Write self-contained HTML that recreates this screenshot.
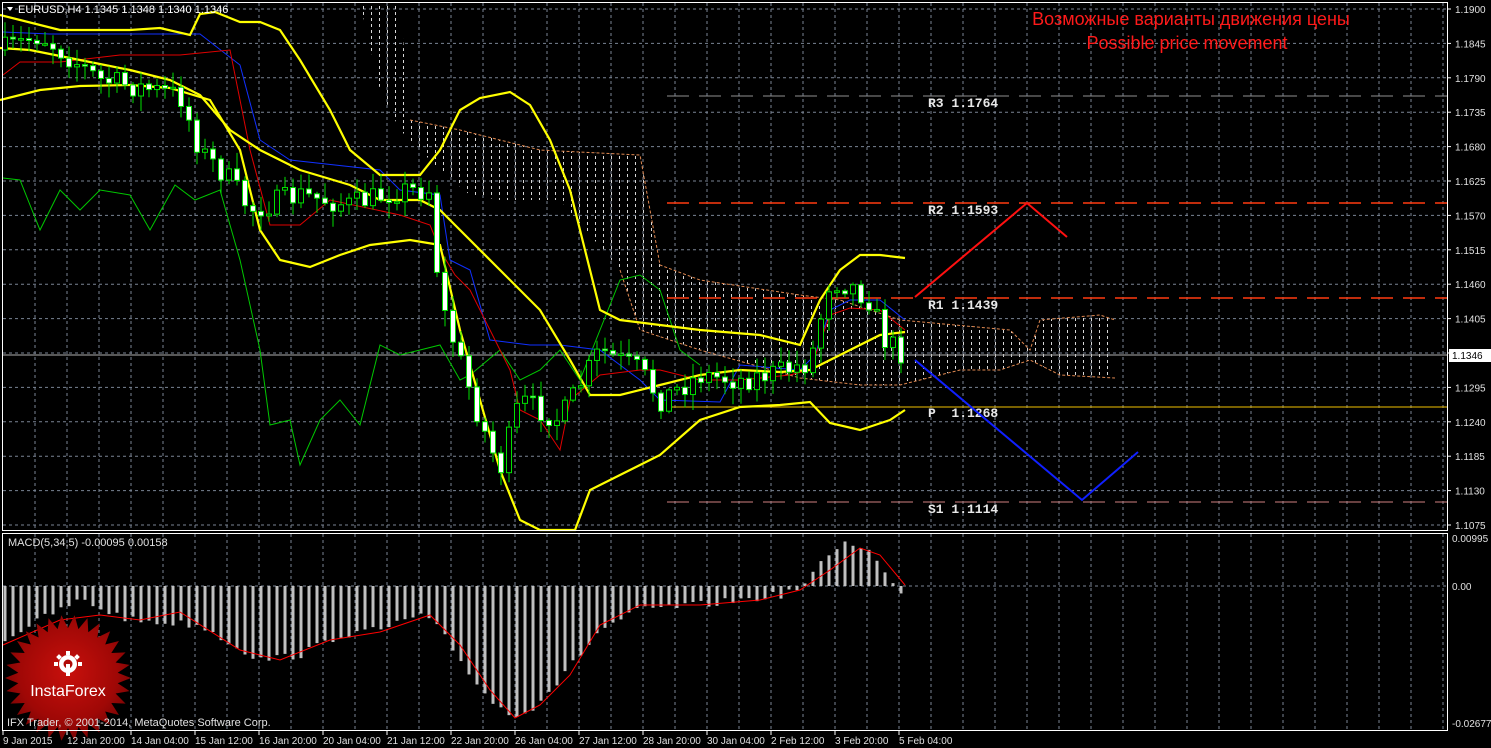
<!DOCTYPE html>
<html><head><meta charset="utf-8"><style>
html,body{margin:0;padding:0;background:#000;overflow:hidden}
svg{display:block}
text{font-family:"Liberation Sans",sans-serif}
text.mono{font-family:"Liberation Mono",monospace;font-weight:bold}
</style></head><body>
<svg id="s" width="1491" height="748" viewBox="0 0 1491 748" xmlns="http://www.w3.org/2000/svg">
<defs>
<pattern id="cl" width="8" height="6" patternUnits="userSpaceOnUse">
<rect x="3" y="0" width="1" height="3" fill="#d8d8d8"/>
</pattern>
<radialGradient id="rg" cx="50%" cy="45%" r="55%">
<stop offset="0" stop-color="#c8100c"/><stop offset="0.7" stop-color="#a00806"/><stop offset="1" stop-color="#7a0404"/>
</radialGradient>
</defs>
<rect width="1491" height="748" fill="#000"/>
<g id="grid"></g>
<polygon fill="url(#cl)" points="360,3 400,3 410,120 460,130 540,150 640,155 660,265 700,280 800,295 840,300 900,320 1010,330 1030,350 1040,320 1100,315 1115,320 1115,378 1060,375 1030,360 1000,370 960,370 900,385 860,385 800,378 700,350 640,330 620,270 560,200 500,200 470,195 440,170 420,150 400,130 380,90"/>
<polyline fill="none" stroke="#e08850" stroke-width="1" stroke-dasharray="3,2" points="410,120 460,130 540,150 640,155 660,265 700,280 800,295 840,300 900,320 1010,330 1030,350 1040,320 1100,315 1115,320"/>
<polyline fill="none" stroke="#e08850" stroke-width="1" stroke-dasharray="3,2" points="620,270 640,330 700,350 800,378 860,385 900,385 960,370 1000,370 1030,360 1060,375 1115,378"/>
<line x1="667" y1="96" x2="1447" y2="96" stroke="#909090" stroke-dasharray="22,10"/>
<line x1="667" y1="203" x2="1447" y2="203" stroke="#ff3a10" stroke-width="1.5" stroke-dasharray="22,10"/>
<line x1="667" y1="298" x2="1447" y2="298" stroke="#ff3a10" stroke-width="1.5" stroke-dasharray="22,10"/>
<line x1="667" y1="407" x2="1447" y2="407" stroke="#f0c000" stroke-width="1"/>
<line x1="667" y1="502" x2="1447" y2="502" stroke="#d08080" stroke-dasharray="22,10"/>
<line x1="3" y1="355" x2="1447" y2="355" stroke="#b0b0b0"/>
<g font-size="13" fill="#e8e8e8">
<text class="mono" x="928" y="107">R3 1.1764</text><text class="mono" x="928" y="214">R2 1.1593</text><text class="mono" x="928" y="309">R1 1.1439</text><text class="mono" x="928" y="417" xml:space="preserve">P  1.1268</text><text class="mono" x="928" y="513">S1 1.1114</text>
</g>
<polyline fill="none" stroke="#00c800" stroke-width="1" points="3,178 20,180 40,230 60,190 80,210 100,190 130,195 150,230 175,185 195,200 220,190 240,260 260,350 270,425 290,420 300,465 320,420 340,400 360,425 380,345 400,355 420,350 440,345 460,380 470,375 500,350 520,380 540,370 560,350 580,380 600,330 620,280 640,275 660,290 680,350 700,365"/>
<polyline fill="none" stroke="#1030ff" stroke-width="1" points="3,32 50,34 200,34 240,65 260,140 290,160 380,170 400,190 440,195 450,260 470,270 490,340 530,345 560,345 600,350 640,380 660,400 720,402 740,365 800,370 815,355 830,310 850,300 880,300 905,320"/>
<polyline fill="none" stroke="#e00000" stroke-width="1" points="3,75 20,62 60,62 120,55 180,55 230,50 250,150 270,225 300,225 330,200 400,215 430,225 440,250 455,275 470,290 490,330 510,370 520,410 540,420 560,450 570,400 600,375 640,370 660,370 700,380 740,380 790,375 810,370 830,315 850,308 880,310 905,330"/>
<g fill="none" stroke="#ffff00" stroke-width="2.2">
<polyline points="0,15 60,30 130,30 160,28 190,35 200,14 215,12 240,22 260,22 280,30 300,60 330,110 350,150 380,175 420,175 440,150 460,110 480,98 510,92 530,105 550,140 570,190 585,250 600,310 620,320 660,325 700,330 760,335 800,345 820,300 840,270 860,255 880,255 905,258"/>
<polyline points="0,48 30,50 70,58 130,70 170,80 200,95 230,130 260,150 300,170 350,185 380,200 420,200 440,210 460,230 500,270 540,310 570,360 590,395 620,395 660,385 700,375 740,370 780,372 810,370 840,355 880,335 905,332"/>
<polyline points="0,100 40,90 80,86 130,85 170,88 210,100 240,150 260,230 280,260 310,267 340,255 370,245 410,240 440,245 460,330 480,400 500,470 520,520 540,530 575,530 590,490 620,475 660,455 700,420 740,407 780,405 810,402 830,423 860,430 890,420 905,410"/>
</g>
<g id="candles"></g>
<polyline fill="none" stroke="#ff1010" stroke-width="2" points="915,297 1027,203 1067,237"/>
<polyline fill="none" stroke="#1020ff" stroke-width="2" points="915,360 1082,500 1138,452"/>
<text x="1191" y="25" font-size="18" fill="#ff1a1a" text-anchor="middle">Возможные варианты движения цены</text>
<text x="1187" y="49" font-size="18" fill="#ff1a1a" text-anchor="middle">Possible price movement</text>
<g id="macd"></g>
<polyline fill="none" stroke="#ff0000" stroke-width="1" points="3,645 60,620 100,615 140,620 180,612 240,650 280,660 330,640 380,632 430,615 460,645 490,690 515,718 540,705 570,675 600,625 640,605 700,605 760,600 800,590 830,570 860,548 880,555 905,585"/>
<polygon id="star" fill="url(#rg)"/>
<g fill="#fff">
<circle cx="68" cy="664" r="9"/><circle cx="68" cy="664" r="4.5" fill="#b00a08"/>
<rect x="66" y="664" width="4" height="12"/>
<rect x="66" y="651" width="4" height="4"/><rect x="57" y="655" width="4" height="4" transform="rotate(-45 59 657)"/><rect x="75" y="655" width="4" height="4" transform="rotate(45 77 657)"/><rect x="54" y="662" width="4" height="4"/><rect x="78" y="662" width="4" height="4"/>
</g>
<text x="68" y="696" font-size="16" fill="#fff" text-anchor="middle">InstaForex</text>
<text x="7" y="726" font-size="11" fill="#e0e0e0">IFX Trader, © 2001-2014, MetaQuotes Software Corp.</text>
<text x="8" y="546" font-size="11" fill="#e0e0e0">MACD(5,34,5) -0.00095 0.00158</text>
<text x="18" y="13" font-size="11" fill="#fff">EURUSD,H4  1.1345 1.1348 1.1340 1.1346</text>
<polygon points="7,7 13,7 10,11" fill="#fff"/>
<rect x="2.5" y="2.5" width="1445" height="528" fill="none" stroke="#fff"/>
<rect x="2.5" y="533.5" width="1445" height="197" fill="none" stroke="#fff"/>
<g id="axis" font-size="10" fill="#e0e0e0"></g>
<rect x="1449" y="349" width="42" height="13" fill="#fff"/>
<text x="1452" y="359" font-size="10" fill="#000">1.1346</text>
</svg>
<script>
(function(){
var NS="http://www.w3.org/2000/svg";
function el(p,t,a,txt){var e=document.createElementNS(NS,t);for(var k in a)e.setAttribute(k,a[k]);if(txt)e.textContent=txt;p.appendChild(e);return e;}
var g=document.getElementById('grid');
for(var x=35;x<1447;x+=32){el(g,'line',{x1:x,y1:3,x2:x,y2:530,stroke:'#7a8494','stroke-dasharray':'3,3'});el(g,'line',{x1:x,y1:534,x2:x,y2:730,stroke:'#7a8494','stroke-dasharray':'3,3'});}
var ax=document.getElementById('axis');
for(var i=0;i<16;i++){var y=9+i*34.4;el(g,'line',{x1:3,y1:y,x2:1447,y2:y,stroke:'#7a8494','stroke-dasharray':'3,3'});
var p=(1.19-i*0.0055).toFixed(4);if(p!="1.1350")el(ax,'text',{x:1455,y:y+4},p);el(ax,'line',{x1:1447,y1:y,x2:1451,y2:y,stroke:'#fff'});}
el(g,'line',{x1:3,y1:586,x2:1447,y2:586,stroke:'#7a8494','stroke-dasharray':'3,3'});
el(ax,'text',{x:1452,y:542},'0.00995');el(ax,'text',{x:1452,y:590},'0.00');el(ax,'text',{x:1452,y:727},'-0.02677');
var tl=["9 Jan 2015","12 Jan 20:00","14 Jan 04:00","15 Jan 12:00","16 Jan 20:00","20 Jan 04:00","21 Jan 12:00","22 Jan 20:00","26 Jan 04:00","27 Jan 12:00","28 Jan 20:00","30 Jan 04:00","2 Feb 12:00","3 Feb 20:00","5 Feb 04:00"];
for(var i=0;i<tl.length;i++){var x=3+i*64;el(ax,'text',{x:x,y:744},tl[i]);el(ax,'line',{x1:x,y1:730,x2:x,y2:735,stroke:'#fff'});}
function interp(pts,x){for(var i=1;i<pts.length;i++){if(x<=pts[i][0]){var a=pts[i-1],b=pts[i];return a[1]+(b[1]-a[1])*(x-a[0])/(b[0]-a[0]);}}return pts[pts.length-1][1];}
var cp=[[3,50],[40,35],[100,80],[180,95],[200,150],[230,180],[250,210],[300,195],[350,205],[400,190],[430,190],[440,300],[460,360],[480,420],[500,470],[520,400],[560,420],[600,350],[640,370],[660,400],[700,375],[740,380],[780,372],[810,362],[830,280],[850,285],[870,300],[885,340],[905,355]];
var seed=7;function rnd(){seed=(seed*16807)%2147483647;return seed/2147483647;}
var c=document.getElementById('candles');var prev=interp(cp,3);
for(var x=5;x<=905;x+=8){var cl=interp(cp,x)+(rnd()-0.5)*24;var op=prev;var tp=Math.min(op,cl),bt=Math.max(op,cl);
var hi=tp-rnd()*14-2,lo=bt+rnd()*14+2;
el(c,'line',{x1:x,y1:hi,x2:x,y2:lo,stroke:'#00e000'});
var h=Math.max(bt-tp,1.5);
el(c,'rect',{x:x-2.5,y:tp,width:5,height:h,fill:cl<op?'#000':'#fff',stroke:'#00e000','stroke-width':1});prev=cl;}
var hp=[[3,640],[40,620],[80,600],[130,620],[200,625],[260,660],[300,655],[340,635],[380,630],[420,615],[440,630],[460,660],[490,700],[510,715],[530,710],[560,680],[600,630],[640,610],[700,605],[740,600],[780,595],[800,588],[810,580],[820,565],[830,552],[840,545],[850,542],[860,545],[870,552],[880,565],[890,583],[900,590],[905,592]];
var m=document.getElementById('macd');
for(var x=5;x<=905;x+=8){var yy=interp(hp,x)+(rnd()-0.5)*8;var t=Math.min(586,yy),b=Math.max(586,yy);el(m,'rect',{x:x-1.5,y:t,width:3,height:b-t,fill:'#c0c0c0'});}
var pts=[];var n=30;for(var i=0;i<2*n;i++){var r=i%2?50:63;var a=Math.PI*i/n;pts.push((68+r*Math.cos(a)).toFixed(1)+','+(678+r*Math.sin(a)).toFixed(1));}
document.getElementById('star').setAttribute('points',pts.join(' '));
})();
</script>
</body></html>
